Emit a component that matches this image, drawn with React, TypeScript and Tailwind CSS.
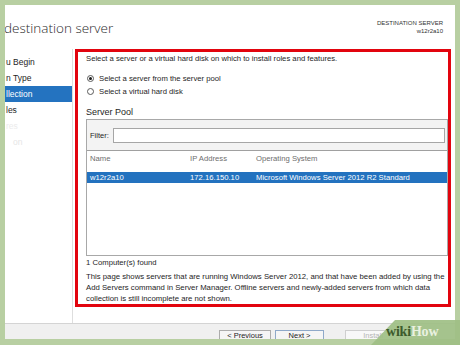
import React from "react";

const font = { fontFamily: '"Segoe UI", "Liberation Sans", Arial, sans-serif' };

function Radio({ checked }: { checked?: boolean }) {
  return (
    <span className="w-[7px] h-[7px] rounded-full border border-[#5a5a5a] bg-white flex items-center justify-center">
      {checked && <span className="w-[3px] h-[3px] rounded-full bg-[#1a1a1a]" />}
    </span>
  );
}

export default function App() {
  return (
    <div
      className="w-[460px] h-[345px] bg-[#b8cfa2] pt-[5px] px-[5px] overflow-hidden relative text-[#1e1e1e]"
      style={font}
    >
      <div className="w-[450px] h-[334px] bg-white flex flex-col overflow-hidden">
        {/* Header */}
        <div className="h-[44px] flex justify-between shrink-0">
          <div
            className="pt-[15px] -ml-[1px] text-[13.5px] leading-[16px] font-light text-[#2b2b2b]"
            style={{ fontFamily: '"Open Sans", "Segoe UI", sans-serif' }}
          >
            destination server
          </div>
          <div className="pt-[14px] pr-[12px] text-right text-[6px] leading-[8px] text-[#333]">
            <div>DESTINATION SERVER</div>
            <div>w12r2a10</div>
          </div>
        </div>

        {/* Body */}
        <div className="h-[274px] flex shrink-0">
          <div className="w-[68px] border-r border-[#dedede] pt-[5px] text-[8.5px] shrink-0">
            <div className="h-[16px] leading-[16px] pl-[1px]">u Begin</div>
            <div className="h-[16px] leading-[16px] pl-[1px]">n Type</div>
            <div className="h-[16px] leading-[16px] pl-[1px] bg-[#2473c0] text-white">llection</div>
            <div className="h-[16px] leading-[16px] pl-[1px]">les</div>
            <div className="h-[16px] leading-[16px] pl-[1px] text-[#ececec]">res</div>
            <div className="h-[16px] leading-[16px] pl-[8px] text-[#e6e6e6]">on</div>
          </div>

          <div className="pl-[2px]">
            <div className="w-[376px] h-[258px] border-[3px] border-[#e2040e] flex flex-col">
              <div className="pt-[2px] pl-[8px] text-[7.7px] leading-[10px] whitespace-nowrap">
                Select a server or a virtual hard disk on which to install roles and features.
              </div>
              <div className="mt-[9px] pl-[9px] h-[12px] flex items-center gap-[5px] text-[7.7px]">
                <Radio checked />
                <span>Select a server from the server pool</span>
              </div>
              <div className="mt-[1px] pl-[9px] h-[12px] flex items-center gap-[5px] text-[7.7px]">
                <Radio />
                <span>Select a virtual hard disk</span>
              </div>
              <div className="mt-[8px] pl-[8px] text-[9px] leading-[12px]">Server Pool</div>

              <div className="mt-[1px] ml-[8px] w-[362px] h-[138px] border border-[#a8a8a8] flex flex-col">
                <div className="h-[31px] bg-[#f3f3f3] border-b border-[#a0a0a0] flex items-start pt-[8px] pl-[3px] pr-[2px]">
                  <span className="w-[23px] text-[7.5px] leading-[15px]">Filter:</span>
                  <div className="flex-1 h-[15px] bg-white border border-[#a6a6a6]" />
                </div>
                <div className="h-[16px] flex items-center text-[7.7px] text-[#6e6e6e]">
                  <span className="w-[103px] pl-[3px]">Name</span>
                  <span className="w-[66px]">IP Address</span>
                  <span>Operating System</span>
                </div>
                <div className="mt-[5px] h-[11px] bg-[#2372bf] text-white flex items-center text-[7.7px]">
                  <span className="w-[103px] pl-[3px]">w12r2a10</span>
                  <span className="w-[66px]">172.16.150.10</span>
                  <span>Microsoft Windows Server 2012 R2 Standard</span>
                </div>
              </div>

              <div className="mt-[2px] pl-[8px] text-[7.7px] leading-[10px]">1 Computer(s) found</div>
              <div className="mt-[3px] pl-[8px] text-[7.75px] leading-[11px] whitespace-nowrap">
                <div>This page shows servers that are running Windows Server 2012, and that have been added by using the</div>
                <div>Add Servers command in Server Manager. Offline servers and newly-added servers from which data</div>
                <div>collection is still incomplete are not shown.</div>
              </div>
            </div>
          </div>
        </div>

        {/* Footer */}
        <div className="h-[40px] shrink-0 border-t border-[#d4d4d4] bg-[#f0f0f0] flex pt-[6px] text-[7.5px]">
          <div className="ml-[214px] w-[52px] h-[20px] border border-[#acacac] bg-[#f5f5f5] text-center leading-[9px]">
            &lt; Previous
          </div>
          <div className="ml-[4px] w-[49px] h-[20px] border border-[#8fa9c9] bg-[#f5f5f5] text-center leading-[9px]">
            Next &gt;
          </div>
          <div className="ml-[21px] w-[56px] h-[20px] border border-[#cfcfcf] bg-[#f8f8f8] text-center leading-[9px] text-[#b5b5b5]">
            Install
          </div>
        </div>
      </div>

      {/* wikiHow watermark */}
      <svg className="absolute left-0 top-0" width="460" height="345" viewBox="0 0 460 345">
        <polygon points="371,345 395,320 460,320 460,345" fill="#9ebf84" opacity="0.92" />
      </svg>
      <div
        className="absolute left-[386px] top-[324px] text-[14px] leading-[16px] font-bold tracking-[-0.2px]"
        style={{ fontFamily: '"Liberation Serif", "DejaVu Serif", serif' }}
      >
        <span className="text-[#3d5b2c]">wiki</span>
        <span className="text-[#e9f1e0]">How</span>
      </div>
    </div>
  );
}
